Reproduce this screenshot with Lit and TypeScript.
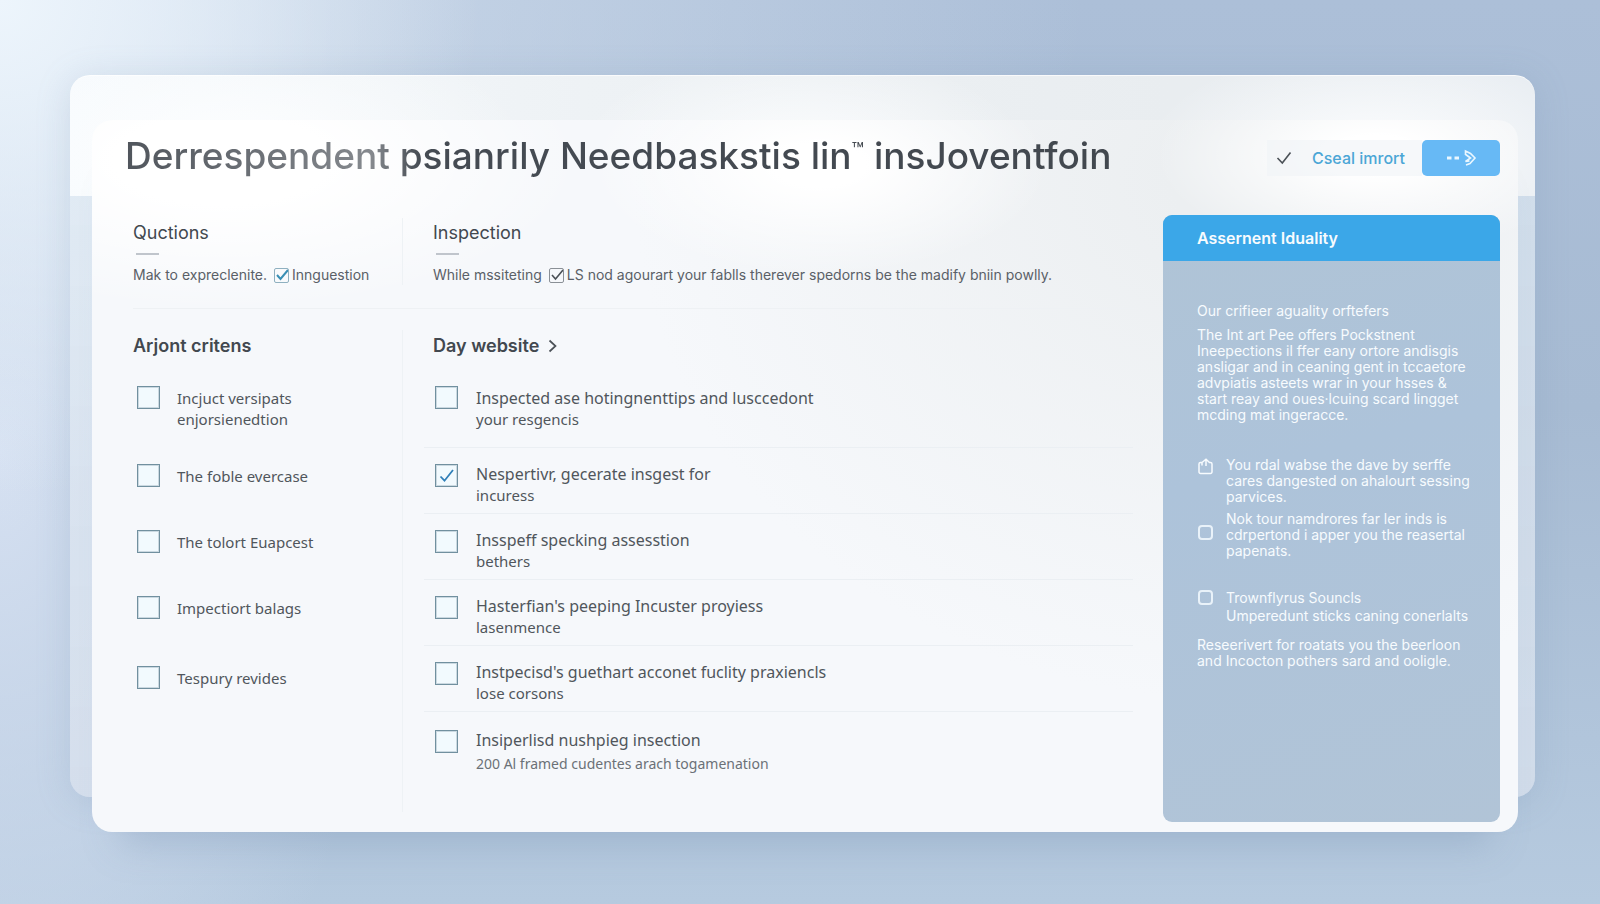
import { LitElement, html, css, svg } from "lit";
import { customElement, property } from "lit/decorators.js";

interface CheckItem {
  lines: string[];
  checked?: boolean;
  note?: boolean;
  spaced?: boolean;
}

const CRITERIA: CheckItem[] = [
  { lines: ["Incjuct versipats", "enjorsienedtion"] },
  { lines: ["The foble evercase"] },
  { lines: ["The tolort Euapcest"] },
  { lines: ["Impectiort balags"], spaced: true },
  { lines: ["Tespury revides"] },
];

const WEBSITE: CheckItem[] = [
  { lines: ["Inspected ase hotingnenttips and lusccedont", "your resgencis"] },
  { lines: ["Nespertivr, gecerate insgest for", "incuress"], checked: true },
  { lines: ["Insspeff specking assesstion", "bethers"] },
  { lines: ["Hasterfian's peeping Incuster proyiess", "lasenmence"] },
  { lines: ["Instpecisd's guethart acconet fuclity praxiencls", "lose corsons"] },
  { lines: ["Insiperlisd nushpieg insection", "200 Al framed cudentes arach togamenation"], note: true },
];

@customElement("check-list")
export class CheckList extends LitElement {
  @property({ attribute: false }) items: CheckItem[] = [];
  @property({ type: Boolean, reflect: true }) ruled = false;

  static styles = css`
    :host { display: block; }
    ul { list-style: none; margin: 0; padding: 0; }
    .row { box-sizing: border-box; min-height: 66px; padding-top: 17px; }
    .row:first-child { min-height: 77px; padding-top: 16px; }
    .row.spaced { min-height: 70px; }
    .item { display: flex; gap: 17px; align-items: flex-start; }
    .box {
      appearance: none; box-sizing: border-box; flex: none;
      width: 23px; height: 23px; margin: 0;
      border: 1px solid #71909f; outline: 1px solid rgba(113, 144, 159, 0.3); outline-offset: -2px;
      background: #f2fafe center / 19px 19px no-repeat;
    }
    .box:checked {
      background-image: url("data:image/svg+xml,%3Csvg xmlns='http://www.w3.org/2000/svg' viewBox='0 0 19 19'%3E%3Cpath d='M3.5 10.5l4 4.2L16 4' fill='none' stroke='%232f7fb8' stroke-width='1.8'/%3E%3C/svg%3E");
    }
    .text { padding-top: 2px; font-family: "Noto Sans", sans-serif; font-size: 15px; line-height: 21px; color: #50565c; white-space: nowrap; }
    .line { display: block; }
    .note .line + .line { font-size: 14px; line-height: 26px; color: #6b7177; }
    :host([ruled]) .item { padding-left: 11px; gap: 18px; }
    :host([ruled]) .row + .row { border-top: 1px solid #ebeff3; padding-top: 16px; }
    :host([ruled]) .row + .note { padding-top: 18px; }
    :host([ruled]) .row + .row .text { padding-top: 0; }
    :host([ruled]) .line:first-child { font-size: 16px; }
  `;

  render() {
    return html`<ul>
      ${this.items.map(
        (item) => html`<li class="row ${item.spaced ? "spaced" : ""} ${item.note ? "note" : ""}">
          <label class="item">
            <input class="box" type="checkbox" .checked=${!!item.checked} />
            <span class="text">${item.lines.map((l) => html`<span class="line">${l}</span>`)}</span>
          </label>
        </li>`
      )}
    </ul>`;
  }
}

const clip = svg`<path d="M5 4.500H3.500A1.500 1.500 0 0 0 2 6v8a1.500 1.500 0 0 0 1.500 1.500h10A1.500 1.500 0 0 0 15 14V6a1.500 1.500 0 0 0-1.500-1.500H12.500L9 1.200 5 4.500V7.500M9 1.500V8" />`;

@customElement("quality-panel")
export class QualityPanel extends LitElement {
  static styles = css`
    :host {
      display: block; border-radius: 9px; overflow: hidden; color: #f7fbfe;
      background: linear-gradient(165deg, #b0c4d6 0%, #adc3da 40%, #b1c4d7 100%);
      font-size: 14px; line-height: 16px;
    }
    .title { margin: 0; padding: 0 34px; background: #3ba7e8; font-size: 16px; font-weight: 600; line-height: 46px; }
    .content { padding: 40px 24px 40px 34px; }
    p { margin: 0; white-space: nowrap; }
    .lead { line-height: 20px; margin-bottom: 6px; }
    .tips { list-style: none; margin: 34px 0 12px; padding: 0; display: grid; }
    .tip { display: grid; grid-template-columns: 17px 1fr; column-gap: 12px; white-space: nowrap; }
    .tip + .tip { margin-top: 6px; }
    .tip.apart { margin-top: 30px; line-height: 18px; }
    .clip { width: 17px; height: 17px; margin-top: 1px; fill: none; stroke: #f7fbfe; stroke-width: 1.5; }
    .mark {
      appearance: none; box-sizing: border-box; width: 15px; height: 15px; margin: 0 1px 6px;
      border: 2px solid #e9f2f9; border-radius: 4px; align-self: center;
    }
    .apart .mark { align-self: start; margin-top: 1px; }
  `;

  render() {
    return html`
      <h2 class="title">Assernent Iduality</h2>
      <div class="content">
        <p class="lead">Our crifieer aguality orftefers</p>
        <p>The Int art Pee offers Pockstnent<br />Ineepections il ffer eany ortore andisgis<br />ansligar and in ceaning gent in tccaetore<br />advpiatis asteets wrar in your hsses &amp;<br />start reay and oues·lcuing scard lingget<br />mcding mat ingeracce.</p>
        <ul class="tips">
          <li class="tip"><svg class="clip" viewBox="0 0 17 17">${clip}</svg>
            <span>You rdal wabse the dave by serffe<br />cares dangested on ahalourt sessing<br />parvices.</span></li>
          <li class="tip"><input class="mark" type="checkbox" id="t1" />
            <label for="t1">Nok tour namdrores far ler inds is<br />cdrpertond i apper you the reasertal<br />papenats.</label></li>
          <li class="tip apart"><input class="mark" type="checkbox" id="t2" />
            <label for="t2">Trownflyrus Souncls<br />Umperedunt sticks caning conerlalts</label></li>
        </ul>
        <p>Reseerivert for roatats you the beerloon<br />and Incocton pothers sard and ooligle.</p>
      </div>`;
  }
}

@customElement("app-root")
export class AppRoot extends LitElement {
  static styles = css`
    :host { display: block; font-family: Inter, "Noto Sans", sans-serif; color: #42484f; }
    .stage {
      box-sizing: border-box; min-height: 100vh; padding: 75px 65px 72px 70px;
      display: grid; grid-template: minmax(0, 1fr) / minmax(0, 1fr);
      background:
        radial-gradient(ellipse 30% 55% at 0% 0%, #edf5fc 0%, rgba(237, 245, 252, 0) 100%),
        radial-gradient(ellipse 60% 60% at 8% 0%, rgba(215, 227, 241, 0.75) 0%, rgba(215, 227, 241, 0) 100%),
        radial-gradient(ellipse 25% 80% at 0% 50%, #d6e1f2 0%, rgba(214, 225, 242, 0) 100%),
        linear-gradient(180deg, #acbfd8 0%, #a7bbd3 45%, #b6cadf 100%);
    }
    .back, .front { grid-area: 1 / 1; border-radius: 20px; }
    .back {
      margin-bottom: 35px;
      background:
        radial-gradient(ellipse 300px 130px at 160px 75px, #fdfeff, rgba(253, 254, 255, 0)) 0 0 / 100% 121px no-repeat,
        radial-gradient(ellipse 230px 110px at 50% 85px, #fdfeff, rgba(253, 254, 255, 0)) 0 0 / 100% 121px no-repeat,
        radial-gradient(ellipse 230px 110px at 89% 80px, #fdfeff, rgba(253, 254, 255, 0)) 0 0 / 100% 121px no-repeat,
        linear-gradient(90deg, #f6fafd, #eef2f5 35%, #e9edf0 75%, #e8edf2) 0 0 / 100% 121px no-repeat,
        linear-gradient(180deg, rgba(226, 236, 244, 0.7), rgba(218, 226, 238, 0.75));
      box-shadow: 0 4px 34px rgba(120, 146, 178, 0.22), inset 0 1px 0 rgba(255, 255, 255, 0.7);
    }
    .front {
      margin: 45px 17px 0 22px; display: flex; flex-direction: column;
      background:
        radial-gradient(ellipse 360px 150px at 130px 40px, #ffffff 30%, rgba(255, 255, 255, 0)),
        radial-gradient(ellipse 230px 110px at 51% 45px, #ffffff 20%, rgba(255, 255, 255, 0)),
        radial-gradient(ellipse 220px 100px at 90% 35px, #ffffff 20%, rgba(255, 255, 255, 0)),
        radial-gradient(ellipse 600px 520px at 80% 60px, #eceff1 10%, rgba(236, 239, 241, 0)),
        #f6f8fb;
      box-shadow: 0 40px 34px -28px rgba(120, 146, 178, 0.35);
    }
    .top {
      box-sizing: border-box; min-height: 76px; padding: 0 18px 0 33px;
      display: flex; align-items: center; justify-content: space-between;
    }
    h1 {
      margin: 0; padding-bottom: 4px; font-size: 37px; font-weight: 500; line-height: 44px; white-space: nowrap;
      background: linear-gradient(90deg, #50555c, #85898e 25%, #454b53 30%, #42484f);
      background-clip: text; color: transparent;
    }
    .tm { font-size: 20px; vertical-align: top; line-height: 32px; }
    .actions { display: flex; }
    button { font: inherit; border: 0; height: 36px; display: flex; align-items: center; }
    .cancel { width: 155px; padding: 0 0 0 9px; gap: 20px; background: rgba(240, 243, 247, 0.6); color: #4ba6d6; font-size: 16px; font-weight: 500; white-space: nowrap; }
    .cancel svg { flex: none; width: 16px; height: 16px; fill: none; stroke: #4b5157; stroke-width: 1.6; }
    .go { width: 78px; justify-content: center; border-radius: 5px; background: #67b9f5; }
    .go svg { width: 32px; height: 18px; fill: none; stroke: #eaf7ff; stroke-width: 1.6; }
    .body { flex: 1; display: grid; grid-template-columns: minmax(0, 1fr) 337px; column-gap: 30px; padding-right: 18px; }
    .main { display: grid; grid-template-rows: auto 1fr; }
    .band { display: grid; grid-template-columns: 311px minmax(0, 1fr); padding-top: 22px; }
    .intro { padding-bottom: 24px; background: linear-gradient(#eef1f4, #eef1f4) 41px 100% / 100% 1px no-repeat; }
    .lists { padding: 21px 0 20px; }
    .side { padding-left: 41px; border-right: 1px solid #eef2f5; }
    .wide { padding-left: 21px; }
    .wide .inset { padding-left: 9px; }
    h2 { margin: 0; font-size: 18px; font-weight: 400; line-height: 30px; }
    h2::after { content: ""; display: block; width: 23px; height: 2px; margin: 5px 0 0 3px; background: #c0c5cc; }
    h3 { margin: 0 0 8px; font-size: 18px; font-weight: 600; line-height: 32px; }
    h3 svg { width: 9px; height: 14px; margin-left: 4px; vertical-align: -1px; fill: none; stroke: #4b5157; stroke-width: 1.7; }
    .intro p { margin: 10px 0 0; font-size: 14px; line-height: 20px; color: #5a6067; white-space: nowrap; display: flex; align-items: center; }
    .tick {
      appearance: none; box-sizing: border-box; width: 15px; height: 15px; margin: 0 3px 0 7px;
      border: 1px solid #8fb0c0; border-radius: 2px;
      background: url("data:image/svg+xml,%3Csvg xmlns='http://www.w3.org/2000/svg' viewBox='0 0 15 15'%3E%3Cpath d='M3 7l3.500 4L14 2' fill='none' stroke='%233a8fb5' stroke-width='2'/%3E%3C/svg%3E") border-box center / 15px 15px no-repeat;
    }
    .tick.dark {
      border-color: #8a9096;
      background-image: url("data:image/svg+xml,%3Csvg xmlns='http://www.w3.org/2000/svg' viewBox='0 0 15 15'%3E%3Cpath d='M3 7l3.500 4L14 2' fill='none' stroke='%234b5157' stroke-width='1.600'/%3E%3C/svg%3E");
    }
    .side check-list { padding-left: 4px; }
    quality-panel { margin: 19px 0 10px; }
  `;

  render() {
    return html`<div class="stage">
      <div class="back"></div>
      <main class="front">
        <header class="top">
          <h1>Derrespendent psianrily Needbaskstis lin<span class="tm">™</span> insJoventfoin</h1>
          <div class="actions">
            <button class="cancel"><svg viewBox="0 0 16 16"><path d="M1.500 8l4.800 5L14.500 2.500" /></svg>Cseal imrort</button>
            <button class="go" aria-label="Next">
              <svg viewBox="0 0 32 18"><path d="M2 9h4.500M9.500 9H14" stroke-width="3" /><path d="M20.500 5.500V2l5 2.500L30 9l-5 5.500-4 1.500M20 5l5.500 4-5 3.500 4-.500" /></svg>
            </button>
          </div>
        </header>
        <div class="body">
          <div class="main">
            <section class="band intro">
              <div class="side">
                <h2>Quctions</h2>
                <p>Mak to expreclenite.<input class="tick" type="checkbox" id="q" checked /><label for="q">Innguestion</label></p>
              </div>
              <div class="wide"><div class="inset">
                <h2>Inspection</h2>
                <p>While mssiteting<input class="tick dark" type="checkbox" id="i" checked /><label for="i">LS nod agourart your fablls therever spedorns be the madify bniin powlly.</label></p>
              </div></div>
            </section>
            <section class="band lists">
              <div class="side">
                <h3>Arjont critens</h3>
                <check-list .items=${CRITERIA}></check-list>
              </div>
              <div class="wide">
                <h3 class="inset">Day website <svg viewBox="0 0 9 14"><path d="M1.500 1.500L7.500 7l-6 5.500" /></svg></h3>
                <check-list ruled .items=${WEBSITE}></check-list>
              </div>
            </section>
          </div>
          <quality-panel></quality-panel>
        </div>
      </main>
    </div>`;
  }
}
